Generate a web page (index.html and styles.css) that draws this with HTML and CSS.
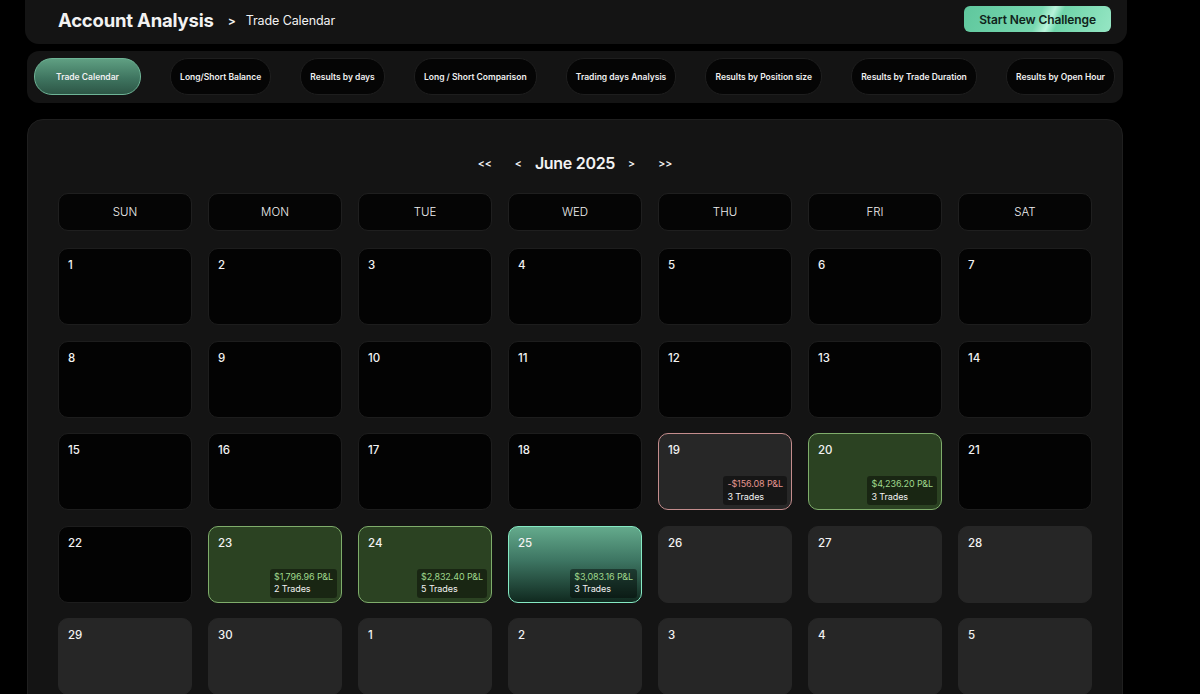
FILE: index.html
```html
<!DOCTYPE html>
<html>
<head>
    <title>Account Analysis - Trade Calendar</title>
    <link rel="stylesheet" href="styles.css">
</head>
<body>
<div class="page">
    <div class="header-bar">
        <div class="crumbs">
            <h1>Account Analysis</h1>
            <span class="crumb-sep">&gt;</span>
            <span class="crumb-current">Trade Calendar</span>
        </div>
        <button type="button" class="btn-challenge">Start New Challenge</button>
    </div>

    <div class="tab-bar">
        <button type="button" class="tab tab-active">Trade Calendar</button>
        <button type="button" class="tab">Long/Short Balance</button>
        <button type="button" class="tab">Results by days</button>
        <button type="button" class="tab">Long / Short Comparison</button>
        <button type="button" class="tab">Trading days Analysis</button>
        <button type="button" class="tab">Results by Position size</button>
        <button type="button" class="tab">Results by Trade Duration</button>
        <button type="button" class="tab">Results by Open Hour</button>
    </div>

    <div class="calendar">
        <div class="cal-nav">
            <span class="nav-arrow nav-far">&lt;&lt;</span>
            <span class="nav-arrow">&lt;</span>
            <span class="cal-month">June 2025</span>
            <span class="nav-arrow">&gt;</span>
            <span class="nav-arrow nav-far">&gt;&gt;</span>
        </div>

        <div class="week-head">
            <div class="day-name">SUN</div>
            <div class="day-name">MON</div>
            <div class="day-name">TUE</div>
            <div class="day-name">WED</div>
            <div class="day-name">THU</div>
            <div class="day-name">FRI</div>
            <div class="day-name">SAT</div>
        </div>

        <div class="days">
            <div class="cell"><span class="num">1</span></div>
            <div class="cell"><span class="num">2</span></div>
            <div class="cell"><span class="num">3</span></div>
            <div class="cell"><span class="num">4</span></div>
            <div class="cell"><span class="num">5</span></div>
            <div class="cell"><span class="num">6</span></div>
            <div class="cell"><span class="num">7</span></div>

            <div class="cell"><span class="num">8</span></div>
            <div class="cell"><span class="num">9</span></div>
            <div class="cell"><span class="num">10</span></div>
            <div class="cell"><span class="num">11</span></div>
            <div class="cell"><span class="num">12</span></div>
            <div class="cell"><span class="num">13</span></div>
            <div class="cell"><span class="num">14</span></div>

            <div class="cell"><span class="num">15</span></div>
            <div class="cell"><span class="num">16</span></div>
            <div class="cell"><span class="num">17</span></div>
            <div class="cell"><span class="num">18</span></div>
            <div class="cell cell-loss">
                <span class="num">19</span>
                <div class="pnl"><span class="pnl-loss">-$156.08 P&amp;L</span><span>3 Trades</span></div>
            </div>
            <div class="cell cell-win">
                <span class="num">20</span>
                <div class="pnl"><span class="pnl-win">$4,236.20 P&amp;L</span><span>3 Trades</span></div>
            </div>
            <div class="cell"><span class="num">21</span></div>

            <div class="cell"><span class="num">22</span></div>
            <div class="cell cell-win">
                <span class="num">23</span>
                <div class="pnl"><span class="pnl-win">$1,796.96 P&amp;L</span><span>2 Trades</span></div>
            </div>
            <div class="cell cell-win">
                <span class="num">24</span>
                <div class="pnl"><span class="pnl-win">$2,832.40 P&amp;L</span><span>5 Trades</span></div>
            </div>
            <div class="cell cell-today">
                <span class="num">25</span>
                <div class="pnl"><span class="pnl-win">$3,083.16 P&amp;L</span><span>3 Trades</span></div>
            </div>
            <div class="cell cell-future"><span class="num">26</span></div>
            <div class="cell cell-future"><span class="num">27</span></div>
            <div class="cell cell-future"><span class="num">28</span></div>

            <div class="cell cell-future"><span class="num">29</span></div>
            <div class="cell cell-future"><span class="num">30</span></div>
            <div class="cell cell-future"><span class="num">1</span></div>
            <div class="cell cell-future"><span class="num">2</span></div>
            <div class="cell cell-future"><span class="num">3</span></div>
            <div class="cell cell-future"><span class="num">4</span></div>
            <div class="cell cell-future"><span class="num">5</span></div>
        </div>
    </div>
</div>
</body>
</html>
```

FILE: styles.css
```css
body {
    margin: 0;
    background: #000;
    color: #f2f2f2;
    font-family: Inter, "Noto Sans", sans-serif;
}
button {
    font-family: inherit;
    cursor: pointer;
}

.page {
    width: 1102px;
    margin-left: 25px;
}

/* header */
.header-bar {
    height: 44px;
    background: #141414;
    border-radius: 0 0 14px 14px;
    display: flex;
    align-items: center;
    justify-content: space-between;
    padding: 0 16px 0 33px;
}
.crumbs {
    display: flex;
    align-items: center;
    margin-top: -4px;
}
.crumbs h1 {
    margin: 0;
    font-size: 18.5px;
    font-weight: 700;
    letter-spacing: -0.2px;
}
.crumb-sep {
    margin: 0 10px 0 14px;
    font-size: 12px;
    font-weight: 600;
}
.crumb-current {
    font-size: 12.5px;
    letter-spacing: -0.1px;
}
.btn-challenge {
    height: 26px;
    margin-top: -6px;
    padding: 0 15px;
    border: none;
    border-radius: 6px;
    background: linear-gradient(115deg, #5fc79d 0%, #78d8b0 50%, #b8f3da 58%, #70d5aa 64%, #96e6c4 100%);
    color: #10231a;
    font-size: 12px;
    font-weight: 600;
    letter-spacing: -0.1px;
}

/* tabs */
.tab-bar {
    margin: 7px 4px 0 2px;
    height: 52px;
    box-sizing: border-box;
    padding: 7px 8px 7px 7px;
    background: #141414;
    border-radius: 12px;
    display: flex;
    justify-content: space-between;
}
.tab {
    height: 37px;
    padding: 0 9px;
    background: #050505;
    border: 1px solid #1e1e1e;
    border-radius: 18px;
    color: #f0f0f0;
    font-size: 8.5px;
    font-weight: 600;
}
.tab-active {
    padding: 0 21px;
    background: linear-gradient(180deg, #5f9f82 0%, #3f7560 55%, #2d5646 100%);
    border-color: #6eb496;
}

/* calendar */
.calendar {
    margin: 16px 4px 0 2px;
    padding: 29px 30px 30px;
    background: #141414;
    border: 1px solid #1f1f1f;
    border-radius: 16px;
    box-sizing: border-box;
}
.cal-nav {
    height: 28px;
    margin-bottom: 16px;
    display: flex;
    justify-content: center;
    align-items: center;
    gap: 13px;
}
.nav-arrow {
    font-size: 10.5px;
    font-weight: 600;
}
.nav-far {
    margin: 0 10px;
}
.cal-month {
    font-size: 16px;
    font-weight: 600;
    letter-spacing: -0.3px;
}
.week-head,
.days {
    display: grid;
    grid-template-columns: repeat(7, 134px);
    column-gap: 16px;
}
.week-head {
    margin-bottom: 17px;
}
.day-name {
    height: 38px;
    box-sizing: border-box;
    background: #050505;
    border: 1px solid #1f1f1f;
    border-radius: 10px;
    display: flex;
    align-items: center;
    justify-content: center;
    font-size: 11.5px;
    font-weight: 300;
}
.days {
    grid-auto-rows: 77px;
    row-gap: 15.5px;
}
.cell {
    position: relative;
    box-sizing: border-box;
    padding: 9px 9px;
    background: #030303;
    border: 1px solid #1d1d1d;
    border-radius: 10px;
    font-size: 12px;
    line-height: 14px;
}
.num {
    font-size: 11.5px;
    font-weight: 500;
}
.cell-future {
    background: #262626;
    border-color: #262626;
}
.cell-loss {
    background: #272727;
    border-color: #c48d8d;
}
.cell-win {
    background: #2b4222;
    border-color: #7fad6b;
}
.cell-today {
    background: linear-gradient(180deg, #64aa8c 0%, #3d7562 45%, #10291f 100%);
    border-color: #86eac4;
    border-width: 1.5px;
}
.pnl {
    position: absolute;
    right: 4px;
    bottom: 4px;
    display: flex;
    flex-direction: column;
    padding: 2px 4px;
    background: rgba(0, 0, 0, 0.42);
    border-radius: 3px;
    font-size: 9px;
    line-height: 12.5px;
    letter-spacing: -0.1px;
}
.pnl-win {
    color: #9fd88c;
}
.pnl-loss {
    color: #e3958f;
}
```
